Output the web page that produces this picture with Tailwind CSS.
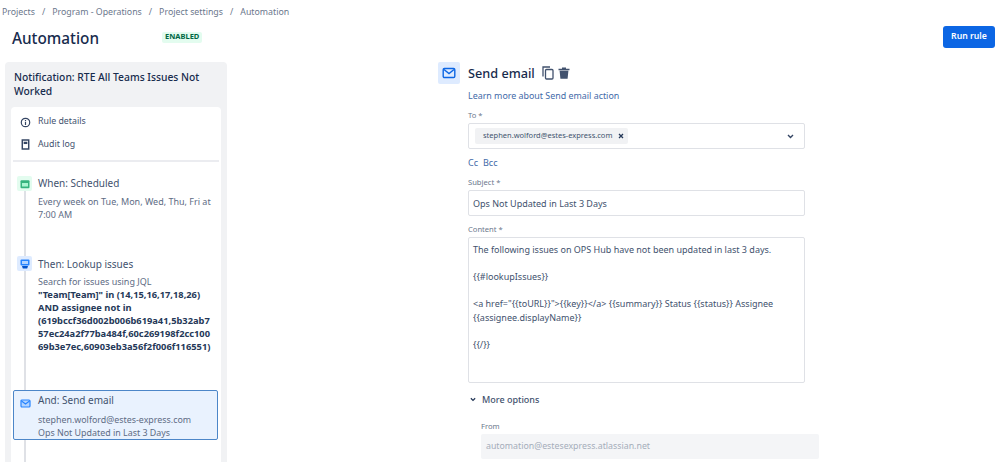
<!DOCTYPE html>
<html><head><meta charset="utf-8">
<script src="https://cdn.jsdelivr.net/npm/@tailwindcss/browser@4"></script>
<title>Automation</title></head>
<body class="bg-white overflow-hidden font-['Noto_Sans',sans-serif] text-[#42526e]">
<div class="w-[999px] h-[462px] overflow-hidden flex flex-col">
  <nav class="h-[26px] pl-[2px] flex items-center gap-[7px] text-[8.8px] text-[#6b778c]">
    <span>Projects</span><span>/</span><span>Program - Operations</span><span>/</span><span>Project settings</span><span>/</span><span>Automation</span>
  </nav>
  <header class="h-[36px] flex items-start justify-between pr-[4px]">
    <div class="flex items-center h-[24px] pl-[12px]">
      <h1 class="w-[150px] text-[15.3px] leading-[24px] font-medium text-[#172b4d]">Automation</h1>
      <span class="h-[11px] px-[3px] -mt-[2px] flex items-center rounded-[2px] bg-[#e3fcef] text-[7.5px] font-bold text-[#006644]">ENABLED</span>
    </div>
    <button class="w-[52px] h-[22px] mt-0 rounded-[3px] bg-[#0c66e4] text-white text-[8.7px] font-semibold">Run rule</button>
  </header>
  <main class="flex-1 flex min-h-0">
    <aside class="ml-[5px] w-[222px] rounded-t-[4px] bg-[#f1f2f4] px-[6px] flex flex-col">
      <h2 class="px-[3px] pt-[8px] h-[45px] text-[10.3px] leading-[14px] font-medium text-[#172b4d]">Notification: RTE All Teams Issues Not Worked</h2>
      <div class="flex-1 bg-white rounded-t-[4px] px-[2px] flex flex-col">
        <div class="h-[28px] flex items-center gap-[7px] pl-[7px] pt-[2px] text-[8.8px]">
          <svg class="w-[11px] h-[11px]" viewBox="0 0 12 12" fill="none" stroke="#344563" stroke-width="1.3"><circle cx="6" cy="6" r="4.6"/><path d="M6 5.4V8.6M6 3.2v1.3"/></svg>
          <span>Rule details</span>
        </div>
        <div class="h-[23px] flex items-center gap-[7px] pl-[7px] text-[8.8px] pb-[4px]">
          <svg class="w-[11px] h-[11px]" viewBox="0 0 12 12"><path d="M2.5 1h7v10h-7z" fill="#fff" stroke="#344563" stroke-width="1.6"/><path d="M4 3h4v2.5H4z" fill="#344563"/></svg>
          <span>Audit log</span>
        </div>
        <div class="h-[2px] bg-[#ebecf0] mt-[2px] mb-[14px]"></div>
        <div class="relative flex-1 flex flex-col">
          <div class="absolute left-[10.5px] top-0 bottom-0 w-[2px] bg-[#dfe1e6]"></div>
          <section class="relative h-[80px] pl-[25px]">
            <span class="absolute left-[4px] top-[0px] w-[15px] h-[15px] rounded-[2px] bg-[#e3fcef] flex items-center justify-center">
              <svg class="w-[10px] h-[10px]" viewBox="0 0 10 10"><rect x="0.5" y="1.2" width="9" height="8" rx="1" fill="#36b37e"/><rect x="2" y="4" width="6" height="3.5" fill="#abf5d1"/></svg>
            </span>
            <h3 class="text-[10px] leading-[15px] text-[#42526e]">When: Scheduled</h3>
            <p class="mt-[4px] text-[9px] leading-[13px] text-[#5e6c84]">Every week on Tue, Mon, Wed, Thu, Fri at 7:00 AM</p>
          </section>
          <section class="relative h-[134px] pl-[25px]">
            <span class="absolute left-[4px] top-[0px] w-[15px] h-[15px] rounded-[2px] bg-[#deebff] flex items-center justify-center">
              <svg class="w-[10px] h-[10px]" viewBox="0 0 10 10"><rect x="0.5" y="0.5" width="9" height="6" rx="1" fill="#2684ff"/><rect x="2" y="2" width="6" height="3" fill="#b3d4ff"/><path d="M2 7h6l-.8 2.5H2.8z" fill="#0052cc"/></svg>
            </span>
            <h3 class="pt-[1px] text-[10px] leading-[15px] text-[#42526e]">Then: Lookup issues</h3>
            <p class="mt-[3px] text-[9px] leading-[13px] text-[#5e6c84]">Search for issues using JQL</p>
            <p class="text-[9.3px] leading-[13px] font-bold text-[#253858] whitespace-nowrap">"Team[Team]" in (14,15,16,17,18,26)<br>AND assignee not in<br>(619bccf36d002b006b619a41,5b32ab7<br>57ec24a2f77ba484f,60c269198f2cc100<br>69b3e7ec,60903eb3a56f2f006f116551)</p>
          </section>
          <section class="relative h-[50px] w-[205px] rounded-[2px] border-[1.5px] border-[#4c86c8] bg-[#e9f2fe] pl-[24px] pt-[2px]">
            <svg class="absolute left-[6px] top-[7px] w-[11px] h-[11px]" viewBox="0 0 11 11" fill="none"><rect x="1" y="2" width="9" height="7" rx="1" fill="#b3d4ff" stroke="#2684ff" stroke-width="1.2"/><path d="M1.5 3l4 3 4-3" stroke="#2684ff" stroke-width="1.1"/></svg>
            <h3 class="text-[10px] leading-[15px] text-[#42526e]">And: Send email</h3>
            <p class="mt-[5px] text-[8.9px] leading-[13px] text-[#5e6c84]">stephen.wolford@estes-express.com<br>Ops Not Updated in Last 3 Days</p>
          </section>
        </div>
      </div>
    </aside>
    <div class="ml-[211px] flex-none w-[360px] flex flex-col">
      <div class="flex h-[22px] items-center">
        <span class="w-[22px] h-[22px] rounded-[2px] bg-[#deebff] flex items-center justify-center">
          <svg class="w-[14px] h-[14px]" viewBox="0 0 14 14" fill="none" stroke="#0c66e4" stroke-width="1.4"><rect x="1.2" y="2.5" width="11.6" height="9" rx="1.2"/><path d="M2 3.5l5 4 5-4"/></svg>
        </span>
        <h2 class="ml-[8px] pt-[1px] text-[12.7px] font-medium text-[#172b4d]">Send email</h2>
        <svg class="ml-[7px] w-[12px] h-[14px] -mt-[1px]" viewBox="0 0 12 14" fill="none" stroke="#42526e" stroke-width="1.3"><path d="M1 10.5V1h7"/><rect x="3.5" y="3.5" width="7.5" height="9.5" rx="1"/></svg>
        <svg class="ml-[4px] w-[12px] h-[12px]" viewBox="0 0 12 12" fill="#42526e"><path d="M0.5 1.8h11v1.4H0.5zM4 0.4h4v1.4H4zM1.6 3.8h8.8l-.8 8H2.4z"/></svg>
      </div>
      <div class="ml-[30px] flex flex-col w-[337px]">
        <a class="mt-[5px] h-[14px] leading-[14px] text-[8.9px] text-[#3f6aa8]">Learn more about Send email action</a>
        <label class="mt-[6px] h-[12px] leading-[12px] text-[7.6px] text-[#6b778c]">To *</label>
        <div class="mt-[2px] h-[26px] border border-[#dfe1e6] rounded-[2px] flex items-center pl-[6px] pr-[10px] justify-between">
          <span class="h-[16px] pl-[8px] pr-[4px] bg-[#f1f2f4] rounded-[2px] flex items-center gap-[6px] text-[7.5px] text-[#42526e]">stephen.wolford@estes-express.com
            <svg class="w-[6px] h-[6px]" viewBox="0 0 6 6" stroke="#253858" stroke-width="1.3"><path d="M1 1l4 4M5 1l-4 4"/></svg>
          </span>
          <svg class="w-[7px] h-[5px]" viewBox="0 0 7 5" fill="none" stroke="#344563" stroke-width="1.4"><path d="M1 1l2.5 2.5L6 1"/></svg>
        </div>
        <div class="mt-[7px] h-[13px] flex gap-[5px] leading-[13px] text-[9px] text-[#3f6aa8]"><span>Cc</span><span>Bcc</span></div>
        <label class="mt-[7px] h-[12px] leading-[12px] text-[7.6px] text-[#6b778c]">Subject *</label>
        <div class="mt-[2px] h-[26px] border border-[#dfe1e6] rounded-[2px] flex items-center px-[4px] pt-[1px] text-[9px] text-[#42526e]">Ops Not Updated in Last 3 Days</div>
        <label class="mt-[7px] h-[12px] leading-[12px] text-[7.6px] text-[#6b778c]">Content *</label>
        <div class="mt-[2px] h-[146px] border border-[#dfe1e6] rounded-[2px] px-[4px] pt-[5px] text-[9px] leading-[13.5px] text-[#42526e]">
          <p>The following issues on OPS Hub have not been updated in last 3 days.</p>
          <p class="mt-[13.5px]">{{#lookupIssues}}</p>
          <p class="mt-[13.5px] w-[310px]">&lt;a href="{{toURL}}"&gt;{{key}}&lt;/a&gt; {{summary}} Status {{status}} Assignee {{assignee.displayName}}</p>
          <p class="mt-[13.5px]">{{/}}</p>
        </div>
        <div class="mt-[10px] h-[13px] flex items-center gap-[6px] text-[9px] font-medium text-[#42526e]">
          <svg class="ml-[2px] w-[6px] h-[5px]" viewBox="0 0 7 5" fill="none" stroke="#253858" stroke-width="1.5"><path d="M1 1l2.5 2.5L6 1"/></svg>
          <span>More options</span>
        </div>
        <div class="ml-[13px] w-[338px]">
          <label class="block mt-[14px] h-[12px] leading-[12px] text-[7.6px] text-[#6b778c]">From</label>
          <div class="mt-[2px] h-[25px] rounded-[2px] bg-[#f4f5f7] flex items-center px-[5px] text-[8.8px] text-[#a5adba]">automation@estesexpress.atlassian.net</div>
        </div>
      </div>
    </div>
  </main>
</div>
</body></html>
